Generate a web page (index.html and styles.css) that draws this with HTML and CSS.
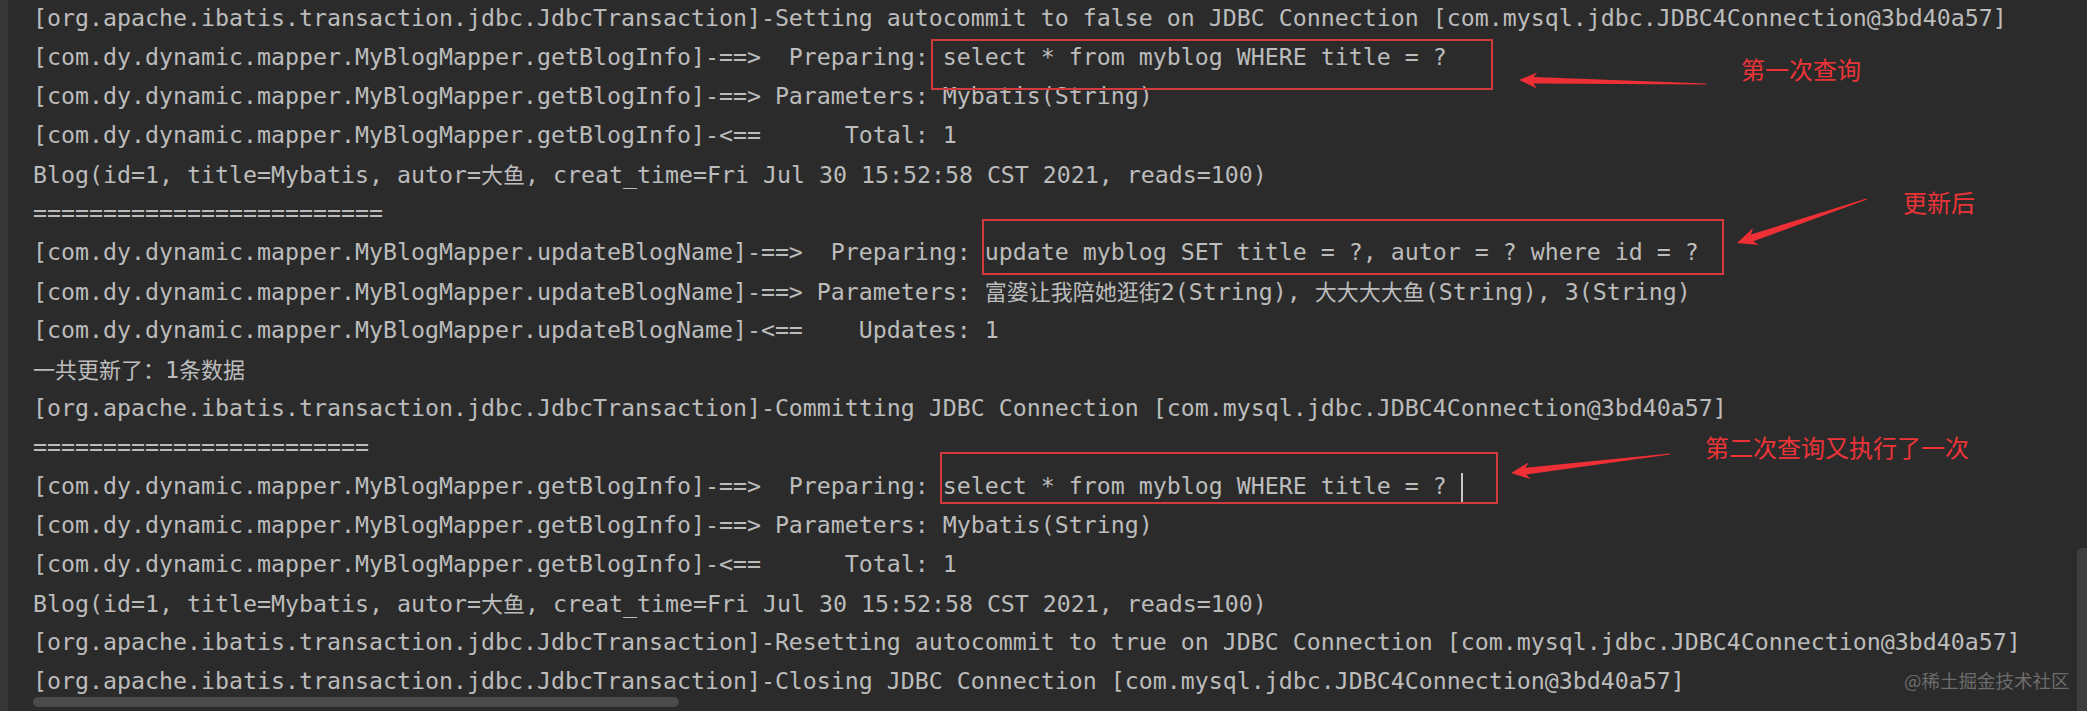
FILE: index.html
```html
<!DOCTYPE html>
<html lang="zh-CN">
<head>
<meta charset="utf-8">
<title>Console</title>
<link rel="stylesheet" href="styles.css">
</head>
<body>
<div class="console">
  <div class="gutter"></div>
  <div class="log">
    <div class="line">[org.apache.ibatis.transaction.jdbc.JdbcTransaction]-Setting autocommit to false on JDBC Connection [com.mysql.jdbc.JDBC4Connection@3bd40a57]</div>
    <div class="line">[com.dy.dynamic.mapper.MyBlogMapper.getBlogInfo]-==>  Preparing: select * from myblog WHERE title = ? </div>
    <div class="line">[com.dy.dynamic.mapper.MyBlogMapper.getBlogInfo]-==> Parameters: Mybatis(String)</div>
    <div class="line">[com.dy.dynamic.mapper.MyBlogMapper.getBlogInfo]-&lt;==      Total: 1</div>
    <div class="line">Blog(id=1, title=Mybatis, autor=<span class="cjk">大鱼</span>, creat_time=Fri Jul 30 15:52:58 CST 2021, reads=100)</div>
    <div class="line">=========================</div>
    <div class="line">[com.dy.dynamic.mapper.MyBlogMapper.updateBlogName]-==>  Preparing: update myblog SET title = ?, autor = ? where id = ? </div>
    <div class="line">[com.dy.dynamic.mapper.MyBlogMapper.updateBlogName]-==> Parameters: <span class="cjk">富婆让我陪她逛街</span>2(String), <span class="cjk">大大大大鱼</span>(String), 3(String)</div>
    <div class="line">[com.dy.dynamic.mapper.MyBlogMapper.updateBlogName]-&lt;==    Updates: 1</div>
    <div class="line"><span class="cjk">一共更新了：</span>1<span class="cjk">条数据</span></div>
    <div class="line">[org.apache.ibatis.transaction.jdbc.JdbcTransaction]-Committing JDBC Connection [com.mysql.jdbc.JDBC4Connection@3bd40a57]</div>
    <div class="line">========================</div>
    <div class="line">[com.dy.dynamic.mapper.MyBlogMapper.getBlogInfo]-==>  Preparing: select * from myblog WHERE title = ? <span class="caret"></span></div>
    <div class="line">[com.dy.dynamic.mapper.MyBlogMapper.getBlogInfo]-==> Parameters: Mybatis(String)</div>
    <div class="line">[com.dy.dynamic.mapper.MyBlogMapper.getBlogInfo]-&lt;==      Total: 1</div>
    <div class="line">Blog(id=1, title=Mybatis, autor=<span class="cjk">大鱼</span>, creat_time=Fri Jul 30 15:52:58 CST 2021, reads=100)</div>
    <div class="line">[org.apache.ibatis.transaction.jdbc.JdbcTransaction]-Resetting autocommit to true on JDBC Connection [com.mysql.jdbc.JDBC4Connection@3bd40a57]</div>
    <div class="line">[org.apache.ibatis.transaction.jdbc.JdbcTransaction]-Closing JDBC Connection [com.mysql.jdbc.JDBC4Connection@3bd40a57]</div>
    <div class="line line-cut">[org.apache.ibatis.datasource.pooled.PooledDataSource]-Returned connection 1003400151 to pool.</div>
  </div>
</div>

<div class="mark mark-1"></div>
<div class="mark mark-2"></div>
<div class="mark mark-3"></div>

<svg class="arrows" width="2087" height="711" viewBox="0 0 2087 711" xmlns="http://www.w3.org/2000/svg">
  <g transform="translate(1519 80) rotate(1.2)">
    <polygon points="0,0 18,-8 14.5,-3.2 187,-0.5 187,0.5 14.5,3.2 18,8"/>
  </g>
  <g transform="translate(1737 243) rotate(-18.7)">
    <polygon points="0,0 20,-9 16,-3.6 137,-0.5 137,0.5 16,3.6 20,9"/>
  </g>
  <g transform="translate(1511 473) rotate(-6.8)">
    <polygon points="0,0 19,-8.5 15,-3.4 160,-0.5 160,0.5 15,3.4 19,8.5"/>
  </g>
</svg>

<div class="note note-1">第一次查询</div>
<div class="note note-2">更新后</div>
<div class="note note-3">第二次查询又执行了一次</div>

<div class="hscroll"></div>
<div class="vscroll"></div>
<div class="watermark">@稀土掘金技术社区</div>
</body>
</html>
```

FILE: styles.css
```css
html, body {
  margin: 0;
  padding: 0;
}

body {
  position: relative;
  width: 2087px;
  height: 711px;
  overflow: hidden;
  background: #2b2b2b;
  color: #bcbcbc;
  font-family: "DejaVu Sans Mono", "Noto Sans CJK SC", monospace;
  font-size: 23.25px;
}

.console {
  display: flex;
  height: 711px;
}

.gutter {
  flex: none;
  width: 8px;
  background: #373737;
}

.log {
  flex: 1;
  padding-left: 25px;
  margin-top: -2.5px;
}

.line {
  white-space: pre;
  height: 39px;
  line-height: 39px;
}

.line-cut {
  margin-top: 4px;
}

.cjk {
  font-family: "Noto Sans CJK SC", sans-serif;
  font-size: 22px;
}

.caret {
  display: inline-block;
  width: 2px;
  height: 30px;
  background: #c8c8c8;
  vertical-align: -9px;
}

/* annotation boxes */
.mark {
  position: absolute;
  box-sizing: border-box;
  border: 2px solid #d23a3e;
}

.mark-1 {
  left: 931px;
  top: 39px;
  width: 562px;
  height: 51px;
}

.mark-2 {
  left: 982px;
  top: 219px;
  width: 742px;
  height: 56px;
}

.mark-3 {
  left: 940px;
  top: 452px;
  width: 558px;
  height: 52px;
}

.arrows {
  position: absolute;
  left: 0;
  top: 0;
  pointer-events: none;
  fill: #ee2f35;
}

.note {
  position: absolute;
  color: #ec3438;
  font-family: "Noto Sans CJK SC", sans-serif;
  font-size: 24px;
  line-height: 24px;
  white-space: nowrap;
}

.note-1 {
  left: 1741px;
  top: 57px;
}

.note-2 {
  left: 1903px;
  top: 190px;
}

.note-3 {
  left: 1705px;
  top: 435px;
}

.hscroll {
  position: absolute;
  left: 33px;
  top: 697px;
  width: 646px;
  height: 10px;
  border-radius: 5px;
  background: #4b4b4b;
}

.vscroll {
  position: absolute;
  right: 0;
  top: 548px;
  width: 10px;
  height: 170px;
  border-radius: 5px 0 0 0;
  background: #3e3e3e;
}

.watermark {
  position: absolute;
  left: 1904px;
  top: 668px;
  color: #6c6c6c;
  font-family: "Noto Sans CJK SC", sans-serif;
  font-size: 18.5px;
  line-height: 24px;
  white-space: nowrap;
}
```
